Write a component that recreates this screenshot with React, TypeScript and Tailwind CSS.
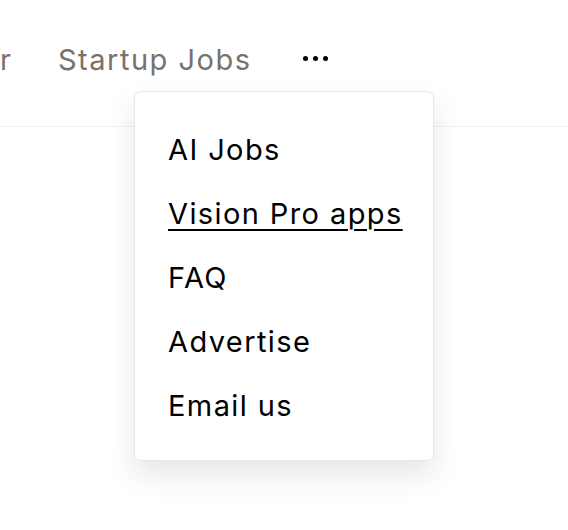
import React from "react";

const menuItems = [
  { id: "ai", label: "AI Jobs" },
  { id: "vision", label: "Vision Pro apps", active: true },
  { id: "faq", label: "FAQ" },
  { id: "advertise", label: "Advertise" },
  { id: "email", label: "Email us" },
];

const App = () => {
  return (
    <main className="relative h-[530px] w-[568px] overflow-hidden bg-white font-['Inter',sans-serif]">
      <header className="h-[127px] border-b border-[#f1f1f1]">
        <nav className="flex h-[119px] items-center text-[29px] tracking-[1.5px] text-[#78716c]">
          <span className="w-[58px]">r</span>
          <span>Startup Jobs</span>
          <button className="ml-[52px] flex items-center gap-[5px] pb-[2px]">
            <span className="h-[5px] w-[5px] rounded-full bg-black" />
            <span className="h-[5px] w-[5px] rounded-full bg-black" />
            <span className="h-[5px] w-[5px] rounded-full bg-black" />
          </button>
        </nav>
      </header>

      {/* dropdown open under the "..." button */}
      <div className="absolute top-[91px] left-[134px] w-[300px] rounded-[7px] border border-[#e7e7e7] bg-white pt-[26px] pb-[22px] shadow-[0_14px_30px_rgba(0,0,0,0.1)]">
        <ul className="flex flex-col">
          {menuItems.map((item) => (
            <li
              key={item.id}
              className={`flex h-[64px] items-center pl-[33px] text-[29px] tracking-[1.4px] text-black ${
                item.active ? "underline decoration-[2px] underline-offset-[5px]" : ""
              }`}
            >
              {item.label}
            </li>
          ))}
        </ul>
      </div>
    </main>
  );
};

export default App;
